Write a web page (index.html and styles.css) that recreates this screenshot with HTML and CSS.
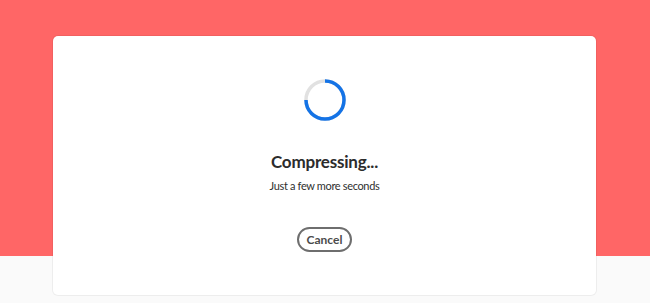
FILE: index.html
```html
<!DOCTYPE html>
<html lang="en">
<head>
<meta charset="UTF-8">
<title>Compressing</title>
<link rel="stylesheet" href="styles.css">
</head>
<body>

<div class="page">
    <div class="card">
        <svg class="spinner" width="42" height="42" viewBox="0 0 42 42">
            <circle cx="21" cy="21" r="19" fill="none" stroke="#e1e1e1" stroke-width="3.5"/>
            <path d="M21 2 A19 19 0 1 1 2 21" fill="none" stroke="#1473e6" stroke-width="3.5"/>
        </svg>
        <h1 class="title">Compressing...</h1>
        <p class="subtitle">Just a few more seconds</p>
        <button class="cancel-btn">Cancel</button>
    </div>
</div>

</body>
</html>
```

FILE: styles.css
```css
body {
    margin: 0;
    font-family: Lato, "Open Sans", sans-serif;
    background: #fafafa;
}
.page {
    height: 303px;
    background: linear-gradient(to bottom, #ff6666 0, #ff6666 256px, #fafafa 256px);
    padding-top: 36px;
    box-sizing: border-box;
}
.card {
    width: 543px;
    height: 259px;
    margin-left: 53px;
    background: #fff;
    border-radius: 5px;
    box-shadow: 0 0 0 1px rgba(0, 0, 0, 0.05);
    padding: 43px 0;
    display: flex;
    flex-direction: column;
    align-items: center;
    box-sizing: border-box;
}
.spinner {
    display: block;
}
.title {
    margin: 30px 0 0;
    font-size: 17px;
    line-height: 22px;
    font-weight: 700;
    letter-spacing: -0.2px;
    color: #2c2c2c;
}
.subtitle {
    margin: 5px 0 0;
    font-size: 11px;
    line-height: 16px;
    letter-spacing: -0.35px;
    color: #2f2f2f;
}
.cancel-btn {
    margin-top: 33px;
    height: 25px;
    padding: 0 8px;
    border: 2px solid #6e6e6e;
    border-radius: 13px;
    background: #fff;
    font-family: inherit;
    font-size: 12px;
    font-weight: 700;
    color: #4b4b4b;
}
```
